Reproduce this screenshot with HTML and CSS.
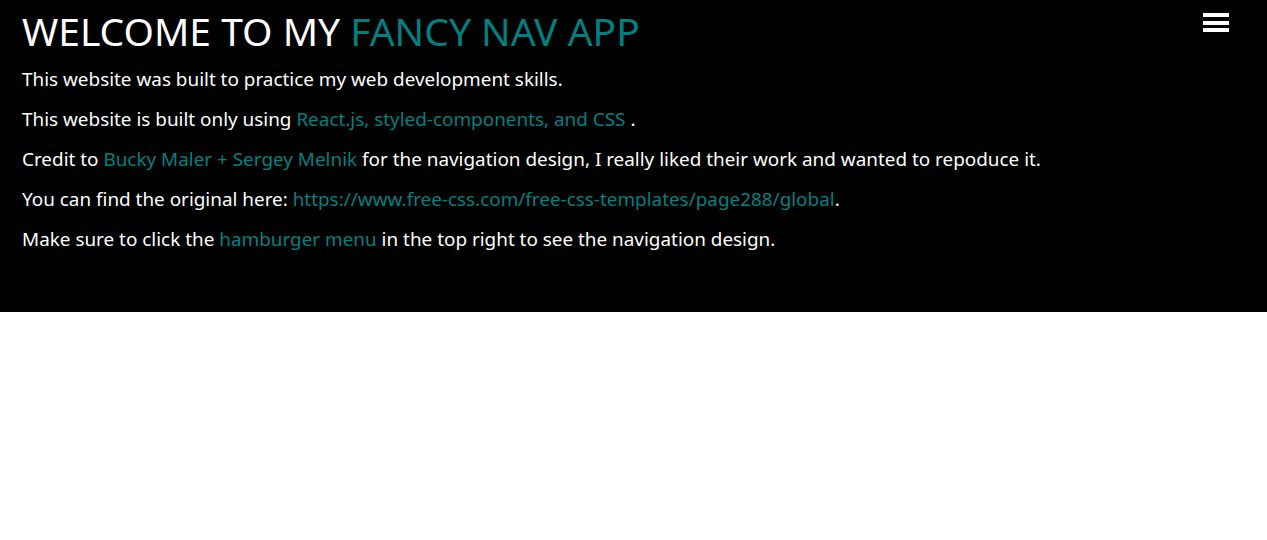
FILE: index.html
```html
<!DOCTYPE html>
<html lang="en">
<head>
<meta charset="utf-8">
<title>Fancy Nav App</title>
<link rel="stylesheet" href="styles.css">
</head>
<body>
<header class="hero">
  <button class="burger" aria-label="Open navigation">
    <span class="bar"></span><span class="bar"></span><span class="bar"></span>
  </button>
  <h1 class="title">WELCOME TO MY <span class="accent">FANCY NAV APP</span></h1>
  <p class="text">This website was built to practice my web development skills.</p>
  <p class="text">This website is built only using <span class="accent">React.js, styled-components, and CSS</span> .</p>
  <p class="text">Credit to <span class="accent">Bucky Maler + Sergey Melnik</span> for the navigation design, I really liked their work and wanted to repoduce it.</p>
  <p class="text">You can find the original here: <a class="accent link" href="#">https://www.free-css.com/free-css-templates/page288/global</a>.</p>
  <p class="text">Make sure to click the <span class="accent">hamburger menu</span> in the top right to see the navigation design.</p>
</header>
</body>
</html>
```

FILE: styles.css
```css
html, body {
  margin: 0;
  padding: 0;
  background: #ffffff;
}

body {
  font-family: "Noto Sans", "Open Sans", sans-serif;
}

.hero {
  position: relative;
  background: #000000;
  color: #ffffff;
  height: 312px;
  box-sizing: border-box;
  padding: 9px 22px 0;
}

.title {
  margin: 0 0 14px;
  font-weight: 400;
  font-size: 39px;
  line-height: 44px;
}

.accent {
  color: #008080;
}

.link {
  text-decoration: none;
}

.text {
  margin: 0 0 16px;
  font-size: 18.9px;
  line-height: 24px;
}

.burger {
  position: absolute;
  top: 13px;
  right: 38px;
  width: 26px;
  padding: 0;
  border: 0;
  background: transparent;
  display: flex;
  flex-direction: column;
  gap: 3.5px;
}

.bar {
  display: block;
  width: 26px;
  height: 4px;
  background: #ffffff;
}
```
